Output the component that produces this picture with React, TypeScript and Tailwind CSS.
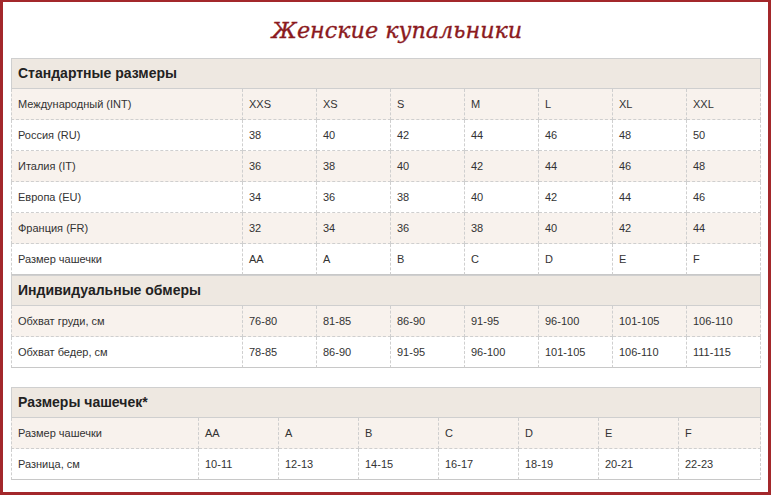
import React from "react";

type Row = { label: string; values: string[] };

const standard: Row[] = [
  { label: "Международный (INT)", values: ["XXS", "XS", "S", "M", "L", "XL", "XXL"] },
  { label: "Россия (RU)", values: ["38", "40", "42", "44", "46", "48", "50"] },
  { label: "Италия (IT)", values: ["36", "38", "40", "42", "44", "46", "48"] },
  { label: "Европа (EU)", values: ["34", "36", "38", "40", "42", "44", "46"] },
  { label: "Франция (FR)", values: ["32", "34", "36", "38", "40", "42", "44"] },
  { label: "Размер чашечки", values: ["AA", "A", "B", "C", "D", "E", "F"] },
];

const measures: Row[] = [
  { label: "Обхват груди, см", values: ["76-80", "81-85", "86-90", "91-95", "96-100", "101-105", "106-110"] },
  { label: "Обхват бедер, см", values: ["78-85", "86-90", "91-95", "96-100", "101-105", "106-110", "111-115"] },
];

const cups: Row[] = [
  { label: "Размер чашечки", values: ["AA", "A", "B", "C", "D", "E", "F"] },
  { label: "Разница, см", values: ["10-11", "12-13", "14-15", "16-17", "18-19", "20-21", "22-23"] },
];

function SectionHeader({ title }: { title: string }) {
  return (
    <div className="flex h-[31px] items-center border border-[#cfcfcf] bg-[#eee8e1] pl-[6px] text-[14px] font-bold text-[#222]">
      {title}
    </div>
  );
}

function Rows({ rows, wide }: { rows: Row[]; wide?: boolean }) {
  return (
    <div>
      {rows.map((row, i) => {
        const last = i === rows.length - 1;
        return (
          <div
            key={row.label + i}
            className={`${wide ? "grid grid-cols-[232px_repeat(7,74px)]" : "grid grid-cols-[188px_repeat(6,80px)_82px]"} ${
              i % 2 === 0 ? "bg-[#f8f2ed]" : "bg-white"
            }`}
          >
            {[row.label, ...row.values].map((v, j) => (
              <div
                key={j}
                className={`flex h-[31px] items-center border-r border-b border-dashed border-[#cfcfcf] pl-[6px] text-[11px] text-[#333] ${
                  j === 0 ? "border-l" : ""
                } ${last ? "border-b-[#c8c8c8] [border-bottom-style:solid]" : ""}`}
              >
                {v}
              </div>
            ))}
          </div>
        );
      })}
    </div>
  );
}

export default function App() {
  return (
    <div
      className="h-[495px] w-[771px] border-x-[3px] border-t-2 border-b-[3px] border-[#a3282b] bg-white pl-[8px]"
      style={{ fontFamily: '"Liberation Sans", Arial, sans-serif' }}
    >
      <div className="flex h-[56px] w-[750px] items-center justify-center pl-[22px] pt-[2px]">
        <h1
          className="text-[22.3px] italic text-[#8b1a1e] [-webkit-text-stroke:0.35px_#8b1a1e]"
          style={{ fontFamily: '"DejaVu Serif", "Liberation Serif", serif' }}
        >
          Женские купальники
        </h1>
      </div>
      <div className="w-[750px]">
        <SectionHeader title="Стандартные размеры" />
        <Rows rows={standard} wide />
        <SectionHeader title="Индивидуальные обмеры" />
        <Rows rows={measures} wide />
      </div>
      <div className="mt-[19px] w-[750px]">
        <SectionHeader title="Размеры чашечек*" />
        <Rows rows={cups} />
      </div>
    </div>
  );
}
